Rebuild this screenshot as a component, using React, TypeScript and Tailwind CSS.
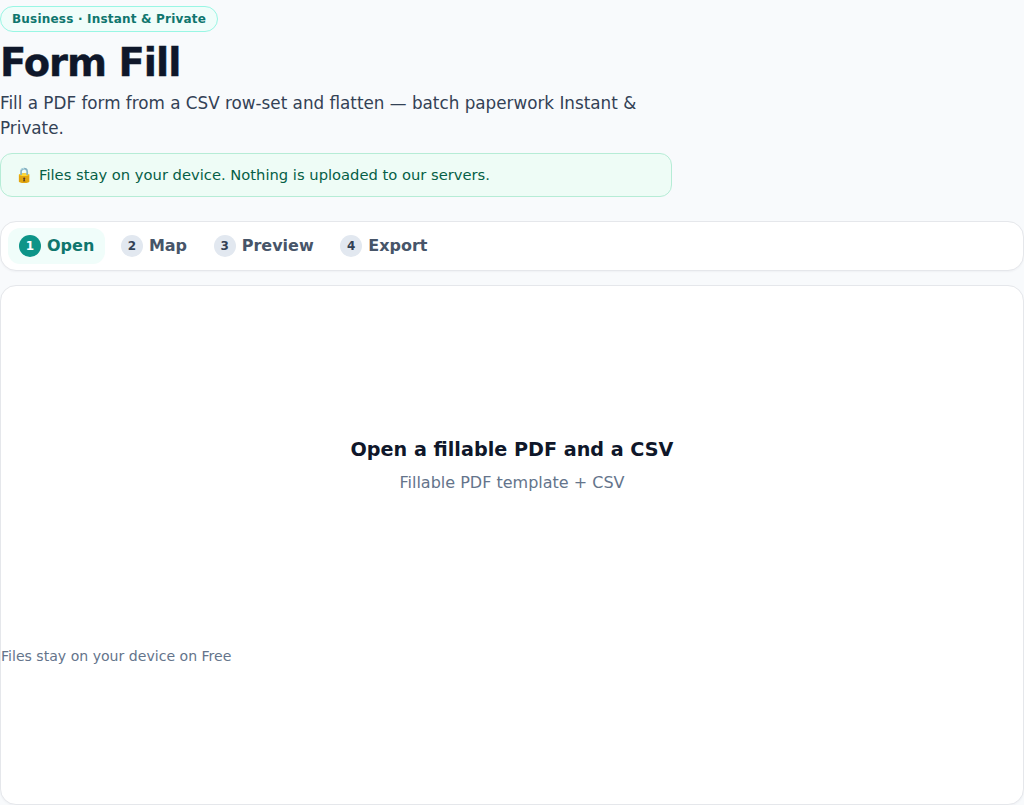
const steps = [
  { n: 1, label: "Open", active: true },
  { n: 2, label: "Map", active: false },
  { n: 3, label: "Preview", active: false },
  { n: 4, label: "Export", active: false },
];

export default function App() {
  return (
    <div className="h-[805px] overflow-hidden bg-[#f8fafc] font-['DejaVu_Sans',sans-serif] text-[#0f172a]">
      {/* Header */}
      <header className="max-w-[672px] pt-[6px]">
        <span className="inline-block rounded-full border border-[#99f6e4] bg-[#f0fdfa] px-[11px] py-[3px] text-[12px] leading-[18px] tracking-[0.2px] font-semibold text-[#0f766e]">
          Business · Instant &amp; Private
        </span>
        <h1 className="mt-[6px] text-[38.4px] leading-[50px] tracking-[-0.025em] font-extrabold [-webkit-text-stroke:0.4px_#0f172a]">Form Fill</h1>
        <p className="mt-[3px] text-[16.8px] leading-[25px] text-[#334155]">
          Fill a PDF form from a CSV row-set and flatten — batch paperwork Instant &amp; Private.
        </p>
        <div className="mt-[12px] flex h-[44px] items-center gap-[6px] rounded-xl border border-[#b6ecd6] bg-[#eefcf6] px-[14px] text-[14.72px] text-[#065f46]">
          <span>🔒</span>
          <span>Files stay on your device. Nothing is uploaded to our servers.</span>
        </div>
      </header>

      {/* Steps */}
      <nav className="mt-6 flex h-[50px] items-center gap-[4.6px] rounded-2xl border border-[#e5e7eb] bg-white px-[7px] shadow-[0_1px_2px_rgba(15,23,42,0.04)]">
        {steps.map((s) => (
          <div
            key={s.n}
            className={`flex h-[36px] items-center gap-[6px] rounded-xl px-[11px] text-[16px] font-semibold ${
              s.active ? "bg-[#f0fdfa] text-[#0f766e]" : "text-[#475569]"
            }`}
          >
            <span
              className={`flex h-[22px] w-[22px] items-center justify-center rounded-full text-[12px] font-bold ${
                s.active ? "bg-[#0d9488] text-white" : "bg-[#e2e8f0] text-[#334155]"
              }`}
            >
              {s.n}
            </span>
            {s.label}
          </div>
        ))}
      </nav>

      {/* Main card */}
      <main className="mt-[14px] h-[520px] rounded-2xl border border-[#e5e7eb] bg-white shadow-[0_1px_2px_rgba(15,23,42,0.04)]">
        <div className="flex h-[358px] flex-col items-center justify-center">
          <h2 className="text-[19.2px] leading-[28px] font-bold">Open a fillable PDF and a CSV</h2>
          <p className="mt-[7px] text-[16px] leading-[24px] text-[#64748b]">Fillable PDF template + CSV</p>
        </div>
        <p className="pt-[2px] text-[14.08px] leading-[20px] text-[#64748b]">Files stay on your device on Free</p>
      </main>
    </div>
  );
}
